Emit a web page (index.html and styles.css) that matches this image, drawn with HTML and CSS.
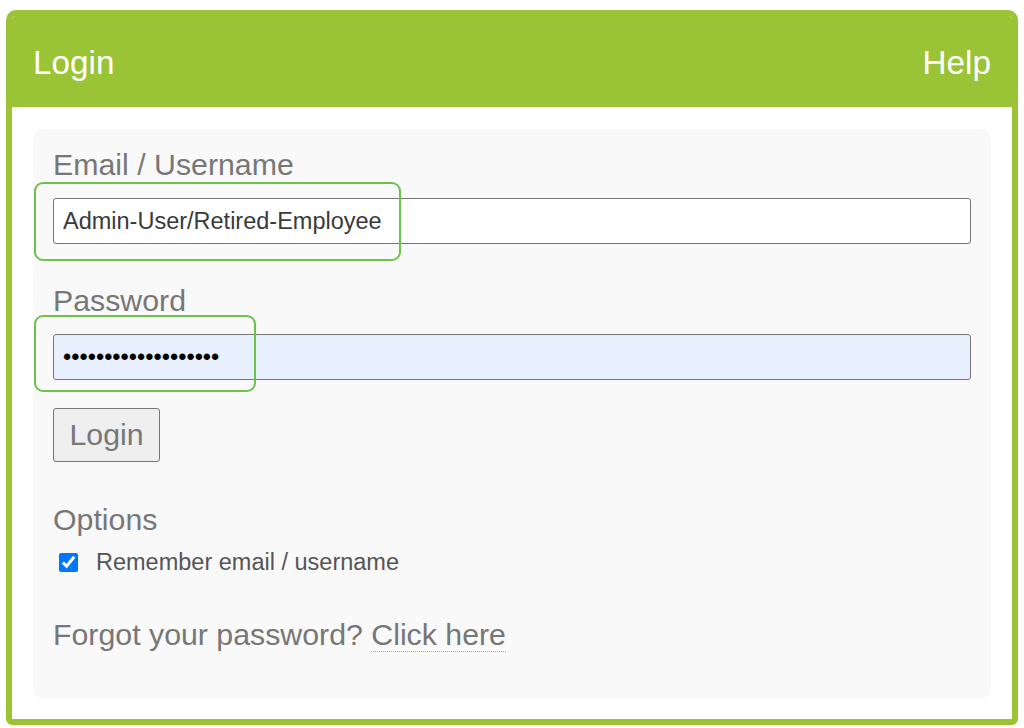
FILE: index.html
```html
<!DOCTYPE html>
<html lang="en">
<head>
<meta charset="utf-8">
<title>Login</title>
<link rel="stylesheet" href="styles.css">
</head>
<body>
<div class="frame">
  <div class="header">
    <span class="header-title">Login</span>
    <span class="header-help">Help</span>
  </div>
  <div class="content">
    <form class="panel">
      <label class="label">Email / Username</label>
      <div class="field">
        <input class="input" type="text" value="Admin-User/Retired-Employee">
        <span class="hl hl-email"></span>
      </div>
      <label class="label label-pw">Password</label>
      <div class="field">
        <input class="input input-autofill" type="password" value="retiredemployee2019">
        <span class="hl hl-pw"></span>
      </div>
      <button class="btn" type="button">Login</button>
      <div class="label label-options">Options</div>
      <label class="check">
        <input class="check-box" type="checkbox" checked>
        <span class="check-text">Remember email / username</span>
      </label>
      <p class="forgot">Forgot your password? <a class="forgot-link" href="#">Click here</a></p>
    </form>
  </div>
</div>
</body>
</html>
```

FILE: styles.css
```css
html, body {
  background: #ffffff;
}

body {
  margin: 10px 6px 0;
  font-family: "Liberation Sans", Arial, sans-serif;
  color: #777777;
}

.frame {
  border: 6px solid #9ac436;
  border-radius: 10px 10px 6px 6px;
  background: #ffffff;
  overflow: hidden;
}

.header {
  background: #9ac436;
  display: flex;
  justify-content: space-between;
  align-items: center;
  padding: 28px 21px 26px 21px;
  color: #ffffff;
  font-size: 33.3px;
  line-height: 37px;
}

.content {
  padding: 22px 21px 20px;
}

.panel {
  background: #f9f9f9;
  border-radius: 10px;
  padding: 19px 20px 47px;
  display: flex;
  flex-direction: column;
  align-items: flex-start;
}

.label {
  display: block;
  font-size: 30.3px;
  line-height: 34px;
  color: #777777;
  margin-bottom: 16px;
}

.label-pw {
  margin-top: 40px;
}

.label-options {
  margin-top: 41px;
  margin-bottom: 0;
}

.field {
  position: relative;
  align-self: stretch;
}

.input {
  display: block;
  width: 100%;
  box-sizing: border-box;
  height: 46px;
  border: 1px solid #767676;
  border-radius: 3px;
  background: #ffffff;
  padding: 0 9px;
  font-family: "Liberation Sans", Arial, sans-serif;
  font-size: 23.5px;
  color: #3a3a3a;
  margin: 0;
}

.input-autofill {
  background: #e8f0fe;
  color: #000000;
}

.hl {
  position: absolute;
  border: 2px solid #6cc24a;
  border-radius: 9px;
  box-sizing: border-box;
  pointer-events: none;
}

.hl-email {
  left: -19px;
  top: -16px;
  width: 367px;
  height: 79px;
}

.hl-pw {
  left: -19px;
  top: -19px;
  width: 222px;
  height: 77px;
}

.btn {
  margin-top: 28px;
  height: 54px;
  padding: 0 15.5px;
  border: 1px solid #767676;
  border-radius: 3px;
  background: #efefef;
  font-family: "Liberation Sans", Arial, sans-serif;
  font-size: 30.3px;
  line-height: 34px;
  color: #777777;
}

.check {
  margin-top: 11px;
  display: flex;
  align-items: center;
  height: 28px;
  font-size: 23.5px;
  line-height: 28px;
  color: #555555;
}

.check-box {
  width: 19px;
  height: 19px;
  margin: 0 18px 0 6px;
  accent-color: #0075ff;
}

.forgot {
  margin: 42px 0 0;
  font-size: 30.3px;
  line-height: 34px;
  color: #777777;
}

.forgot-link {
  color: #777777;
  text-decoration: none;
  border-bottom: 1px dotted #9ac436;
}
```
